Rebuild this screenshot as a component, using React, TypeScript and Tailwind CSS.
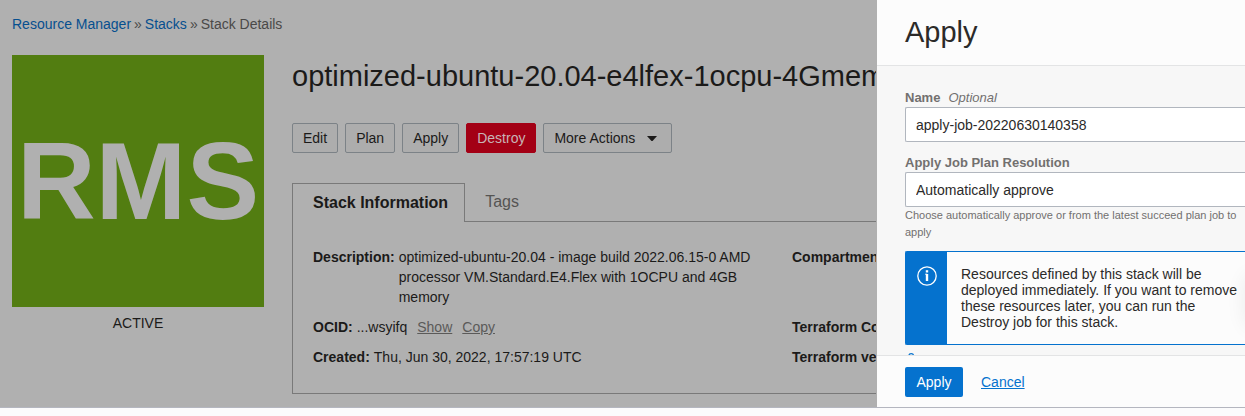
import type { ReactNode } from "react";
import clsx from "clsx";

const stack = {
  name: "optimized-ubuntu-20.04-e4lfex-1ocpu-4Gmem",
  description:
    "optimized-ubuntu-20.04 - image build 2022.06.15-0 AMD processor VM.Standard.E4.Flex with 1OCPU and 4GB memory",
  ocid: "...wsyifq",
  created: "Thu, Jun 30, 2022, 17:57:19 UTC",
};

interface ActionButtonProps {
  children: ReactNode;
  danger?: boolean;
}

function ActionButton({ children, danger }: ActionButtonProps) {
  return (
    <button
      type="button"
      className={clsx(
        "flex h-[30px] shrink-0 items-center rounded-xs border px-2.5",
        danger
          ? "border-[#a30015] bg-[#a30015] text-[#c8b4b6]"
          : "border-[#7c8287] bg-[#adadad] text-[#1b1a19]"
      )}
    >
      {children}
    </button>
  );
}

interface DetailProps {
  label: string;
  children?: ReactNode;
}

function Detail({ label, children }: DetailProps) {
  return (
    <div className="flex gap-1">
      <dt className="shrink-0 font-bold whitespace-nowrap">{label}</dt>
      <dd>{children}</dd>
    </div>
  );
}

function Breadcrumbs() {
  return (
    <nav className="flex gap-[3px] text-[#4a4948]">
      <a href="#resource-manager" className="text-[#064f8f]">
        Resource Manager
      </a>
      <span>»</span>
      <a href="#stacks" className="text-[#064f8f]">
        Stacks
      </a>
      <span>»</span>
      <span>Stack Details</span>
    </nav>
  );
}

function StackTabs() {
  return (
    <section className="mt-[30px]">
      <div role="tablist" className="flex h-[38px] text-base">
        <button
          type="button"
          role="tab"
          aria-selected="true"
          className="relative -mb-px border border-b-0 border-[#797979] bg-[#b0b0b0] pr-4 pl-5 font-bold"
        >
          Stack Information
        </button>
        <button type="button" role="tab" aria-selected="false" className="px-5 text-[#555453]">
          Tags
        </button>
      </div>
      <div
        role="tabpanel"
        className="grid grid-cols-[479px_1fr] gap-y-2.5 border border-r-0 border-[#797979] pt-[25px] pb-[26px] pl-5"
      >
        <dl className="pr-6">
          <Detail label="Description:">{stack.description}</Detail>
        </dl>
        <dl>
          <Detail label="Compartment:" />
        </dl>
        <dl>
          <Detail label="OCID:">
            {stack.ocid}
            <button type="button" className="ml-2.5 text-[#5b5a59] underline">
              Show
            </button>
            <button type="button" className="ml-2.5 text-[#5b5a59] underline">
              Copy
            </button>
          </Detail>
        </dl>
        <dl>
          <Detail label="Terraform Configuration:" />
        </dl>
        <dl>
          <Detail label="Created:">{stack.created}</Detail>
        </dl>
        <dl>
          <Detail label="Terraform version:" />
        </dl>
      </div>
    </section>
  );
}

function StackDetails() {
  return (
    <main className="min-w-0 flex-1 overflow-hidden bg-[#b0b0b0] pt-3.5 pr-px pl-3 text-[#1b1a19]">
      <Breadcrumbs />
      <div className="mt-[21px] flex gap-7">
        <div className="w-[252px] shrink-0">
          <div className="flex h-[252px] items-center justify-center bg-[#527d11] text-[109px] leading-none font-bold text-[#b0b0b0]">
            RMS
          </div>
          <p className="mt-1.5 text-center">ACTIVE</p>
        </div>
        <div className="min-w-0 flex-1 overflow-hidden">
          <h1 className="text-[29px] leading-[42px] whitespace-nowrap">{stack.name}</h1>
          <div className="mt-[26px] flex gap-[7px]">
            <ActionButton>Edit</ActionButton>
            <ActionButton>Plan</ActionButton>
            <ActionButton>Apply</ActionButton>
            <ActionButton danger>Destroy</ActionButton>
            <ActionButton>
              More Actions
              <svg viewBox="0 0 10 5" className="mr-1 ml-3 h-[5px] w-2.5" fill="currentColor">
                <path d="M0 0h10L6 4.4Q5 5.4 4 4.4Z" />
              </svg>
            </ActionButton>
          </div>
          <StackTabs />
        </div>
      </div>
    </main>
  );
}

function InfoNotice() {
  return (
    <div className="mt-2.5 flex rounded-l-xs border border-r-0 border-[#0572ce] bg-[#fcfcfc]">
      <div className="w-[41px] shrink-0 bg-[#0572ce] pt-3.5 pl-[11px]">
        <svg viewBox="0 0 20 20" className="h-5 w-5" fill="none" stroke="#fff">
          <circle cx="10" cy="10" r="9.2" strokeWidth="1.3" />
          <path d="M8.2 8.2h2v6.6" strokeWidth="1" />
          <path d="M10 8v7" strokeWidth="2.4" />
          <path d="M10 4.2v2.3" strokeWidth="2.4" />
        </svg>
      </div>
      <p className="py-3.5 pl-3.5 leading-4 text-[#2b2a29]">
        Resources defined by this stack will be deployed immediately. If you want to remove these
        resources later, you can run the Destroy job for this stack.
      </p>
    </div>
  );
}

function ApplyPanel() {
  return (
    <aside className="relative flex w-[368px] shrink-0 flex-col overflow-hidden bg-[#f7f7f7] text-[#2b2a29]">
      <header className="h-[66px] shrink-0 border-b border-[#e3e4e5] bg-[#fcfcfc] pt-[11px] pl-7">
        <h2 className="text-[29px] leading-[42px]">Apply</h2>
      </header>
      <form className="min-h-0 flex-1 overflow-hidden pt-[23px] pl-7">
        <label htmlFor="job-name" className="block text-[13px] leading-[18px] text-[#72706f]">
          <span className="font-bold">Name</span>
          <em className="ml-2">Optional</em>
        </label>
        <input
          id="job-name"
          type="text"
          defaultValue="apply-job-20220630140358"
          className="block h-[35px] w-full rounded-l-xs border border-r-0 border-[#b1b6be] bg-white px-2.5 outline-none"
        />
        <label
          htmlFor="plan-resolution"
          className="mt-3 block text-[13px] leading-[18px] font-bold text-[#72706f]"
        >
          Apply Job Plan Resolution
        </label>
        <select
          id="plan-resolution"
          className="block h-[35px] w-full appearance-none rounded-l-xs border border-r-0 border-[#b1b6be] bg-white px-2.5 outline-none"
        >
          <option>Automatically approve</option>
        </select>
        <p className="text-[11px] leading-[17px] text-[#72706f]">
          Choose automatically approve or from the latest succeed plan job to apply
        </p>
        <InfoNotice />
        <button type="button" aria-label="Advanced options" className="mt-2 block pl-0.5">
          <svg viewBox="0 0 10 10" className="h-2.5 w-2.5" fill="none" stroke="#0572ce">
            <path d="M1.8 5V3a2.4 2.4 0 0 1 4.8 0v2" strokeWidth="1.2" />
            <path d="M1 5h8v5H1z" />
          </svg>
        </button>
      </form>
      <footer className="flex shrink-0 items-center gap-[18px] border-t border-[#e3e4e5] bg-[#fcfcfc] pt-[11px] pb-2.5 pl-7">
        <button type="button" className="h-[30px] min-w-[58px] rounded-xs bg-[#0572ce] px-2.5 text-white">
          Apply
        </button>
        <button type="button" className="text-[#0572ce] underline">
          Cancel
        </button>
      </footer>
      {/* help widget docked past the right edge, only its shadow shows */}
      <div className="absolute top-[275px] left-full h-[52px] w-10 rounded-lg shadow-[0_0_20px_rgba(0,0,0,0.07)]" />
    </aside>
  );
}

export default function App() {
  return (
    <div className="flex h-screen flex-col bg-[#fbfbfc] pb-2 font-['Helvetica_Neue','Liberation_Sans',Arial,sans-serif] text-sm leading-5">
      <div className="flex min-h-0 flex-1 border-b border-[#b4b6bf]">
        <StackDetails />
        <ApplyPanel />
      </div>
    </div>
  );
}
